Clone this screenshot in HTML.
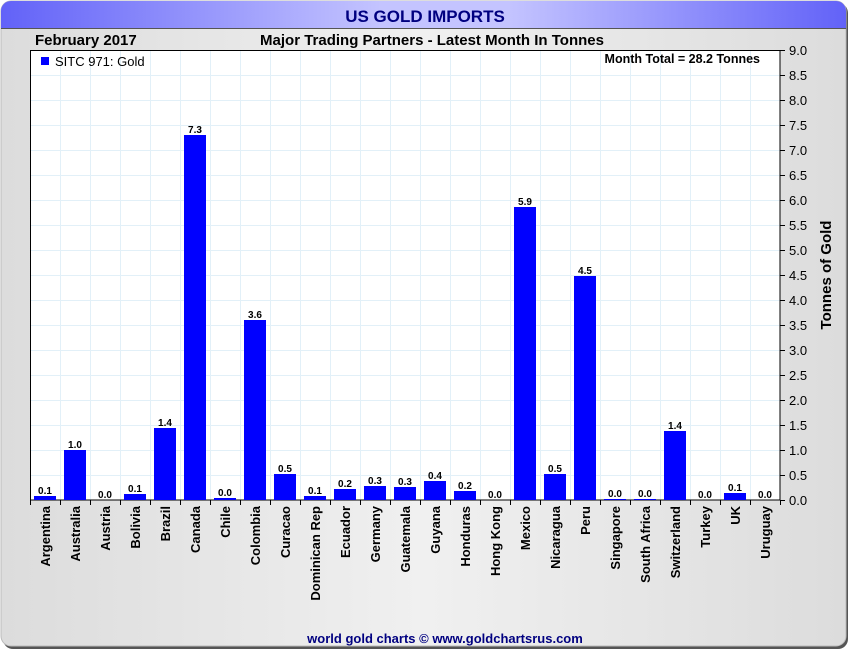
<!DOCTYPE html>
<html><head><meta charset="utf-8"><style>
body{margin:0;width:850px;height:650px;background:#fff;overflow:hidden;font-family:"Liberation Sans",Arial,sans-serif}
</style></head><body>
<svg width="850" height="650" xmlns="http://www.w3.org/2000/svg" font-family="Liberation Sans, Arial, sans-serif">
<defs>
<linearGradient id="hd" x1="0" x2="1" y1="0" y2="0"><stop offset="0" stop-color="#6262f8"/><stop offset="0.45" stop-color="#c4c4ff"/><stop offset="0.6" stop-color="#c4c4ff"/><stop offset="1" stop-color="#6262f8"/></linearGradient>
<linearGradient id="bg" x1="0" x2="1" y1="0" y2="0"><stop offset="0" stop-color="#dcdcdc"/><stop offset="0.5" stop-color="#f0f0f0"/><stop offset="1" stop-color="#dcdcdc"/></linearGradient>
</defs>
<rect x="3" y="3" width="845" height="646" rx="10" fill="#555"/>
<rect x="1" y="1" width="845" height="645" rx="10" fill="url(#bg)" stroke="#bbb"/>
<path d="M1,28 V11 A10,10 0 0 1 11,1 H836 A10,10 0 0 1 846,11 V28 Z" fill="url(#hd)"/>
<line x1="1" y1="28.5" x2="846" y2="28.5" stroke="#555"/>
<text x="425" y="22" text-anchor="middle" font-size="17" font-weight="bold" fill="#000080">US GOLD IMPORTS</text>
<text x="35" y="45" font-size="15" font-weight="bold">February 2017</text>
<text x="432" y="45" text-anchor="middle" font-size="15" font-weight="bold">Major Trading Partners - Latest Month In Tonnes</text>
<rect x="30" y="50" width="750" height="450" fill="#fff"/>
<g stroke="#e2f0f8" stroke-width="1">
<path d="M60.5,50V500M90.5,50V500M120.5,50V500M150.5,50V500M180.5,50V500M210.5,50V500M240.5,50V500M270.5,50V500M300.5,50V500M330.5,50V500M360.5,50V500M390.5,50V500M420.5,50V500M450.5,50V500M480.5,50V500M510.5,50V500M540.5,50V500M570.5,50V500M600.5,50V500M630.5,50V500M660.5,50V500M690.5,50V500M720.5,50V500M750.5,50V500"/>
<path d="M30,75.5H780M30,100.5H780M30,125.5H780M30,150.5H780M30,175.5H780M30,200.5H780M30,225.5H780M30,250.5H780M30,275.5H780M30,300.5H780M30,325.5H780M30,350.5H780M30,375.5H780M30,400.5H780M30,425.5H780M30,450.5H780M30,475.5H780"/>
</g>
<rect x="30.5" y="50.5" width="749.5" height="449.5" fill="none" stroke="#000"/>
<g fill="#0000ff">
<rect x="34" y="496" width="22" height="4"/>
<rect x="64" y="450" width="22" height="50"/>
<rect x="124" y="494" width="22" height="6"/>
<rect x="154" y="428" width="22" height="72"/>
<rect x="184" y="135" width="22" height="365"/>
<rect x="214" y="498" width="22" height="2"/>
<rect x="244" y="320" width="22" height="180"/>
<rect x="274" y="474" width="22" height="26"/>
<rect x="304" y="496" width="22" height="4"/>
<rect x="334" y="489" width="22" height="11"/>
<rect x="364" y="486" width="22" height="14"/>
<rect x="394" y="487" width="22" height="13"/>
<rect x="424" y="481" width="22" height="19"/>
<rect x="454" y="491" width="22" height="9"/>
<rect x="514" y="207" width="22" height="293"/>
<rect x="544" y="474" width="22" height="26"/>
<rect x="574" y="276" width="22" height="224"/>
<rect x="604" y="499" width="22" height="1"/>
<rect x="634" y="499" width="22" height="1"/>
<rect x="664" y="431" width="22" height="69"/>
<rect x="724" y="493" width="22" height="7"/>
</g>
<g font-size="10" font-weight="bold" text-anchor="middle">
<text x="45" y="494">0.1</text><text x="75" y="448">1.0</text><text x="105" y="498">0.0</text><text x="135" y="492">0.1</text><text x="165" y="426">1.4</text><text x="195" y="133">7.3</text><text x="225" y="496">0.0</text><text x="255" y="318">3.6</text><text x="285" y="472">0.5</text><text x="315" y="494">0.1</text><text x="345" y="487">0.2</text><text x="375" y="484">0.3</text><text x="405" y="485">0.3</text><text x="435" y="479">0.4</text><text x="465" y="489">0.2</text><text x="495" y="498">0.0</text><text x="525" y="205">5.9</text><text x="555" y="472">0.5</text><text x="585" y="274">4.5</text><text x="615" y="497">0.0</text><text x="645" y="497">0.0</text><text x="675" y="429">1.4</text><text x="705" y="498">0.0</text><text x="735" y="491">0.1</text><text x="765" y="498">0.0</text>
</g>
<path d="M30.5,500V505M60.5,500V505M90.5,500V505M120.5,500V505M150.5,500V505M180.5,500V505M210.5,500V505M240.5,500V505M270.5,500V505M300.5,500V505M330.5,500V505M360.5,500V505M390.5,500V505M420.5,500V505M450.5,500V505M480.5,500V505M510.5,500V505M540.5,500V505M570.5,500V505M600.5,500V505M630.5,500V505M660.5,500V505M690.5,500V505M720.5,500V505M750.5,500V505M780.5,500V505" stroke="#000"/>
<path d="M780,50.5h5M780,75.5h5M780,100.5h5M780,125.5h5M780,150.5h5M780,175.5h5M780,200.5h5M780,225.5h5M780,250.5h5M780,275.5h5M780,300.5h5M780,325.5h5M780,350.5h5M780,375.5h5M780,400.5h5M780,425.5h5M780,450.5h5M780,475.5h5M780,500.5h5" stroke="#000"/>
<g font-size="13" fill="#000">
<text x="789" y="55">9.0</text><text x="789" y="80">8.5</text><text x="789" y="105">8.0</text><text x="789" y="130">7.5</text><text x="789" y="155">7.0</text><text x="789" y="180">6.5</text><text x="789" y="205">6.0</text><text x="789" y="230">5.5</text><text x="789" y="255">5.0</text><text x="789" y="280">4.5</text><text x="789" y="305">4.0</text><text x="789" y="330">3.5</text><text x="789" y="355">3.0</text><text x="789" y="380">2.5</text><text x="789" y="405">2.0</text><text x="789" y="430">1.5</text><text x="789" y="455">1.0</text><text x="789" y="480">0.5</text><text x="789" y="505">0.0</text>
</g>
<text transform="translate(831,275) rotate(-90)" text-anchor="middle" font-size="15" font-weight="bold">Tonnes of Gold</text>
<g font-size="13" font-weight="bold" text-anchor="end">
<text transform="translate(50,506) rotate(-90)">Argentina</text>
<text transform="translate(80,506) rotate(-90)">Australia</text>
<text transform="translate(110,506) rotate(-90)">Austria</text>
<text transform="translate(140,506) rotate(-90)">Bolivia</text>
<text transform="translate(170,506) rotate(-90)">Brazil</text>
<text transform="translate(200,506) rotate(-90)">Canada</text>
<text transform="translate(230,506) rotate(-90)">Chile</text>
<text transform="translate(260,506) rotate(-90)">Colombia</text>
<text transform="translate(290,506) rotate(-90)">Curacao</text>
<text transform="translate(320,506) rotate(-90)">Dominican Rep</text>
<text transform="translate(350,506) rotate(-90)">Ecuador</text>
<text transform="translate(380,506) rotate(-90)">Germany</text>
<text transform="translate(410,506) rotate(-90)">Guatemala</text>
<text transform="translate(440,506) rotate(-90)">Guyana</text>
<text transform="translate(470,506) rotate(-90)">Honduras</text>
<text transform="translate(500,506) rotate(-90)">Hong Kong</text>
<text transform="translate(530,506) rotate(-90)">Mexico</text>
<text transform="translate(560,506) rotate(-90)">Nicaragua</text>
<text transform="translate(590,506) rotate(-90)">Peru</text>
<text transform="translate(620,506) rotate(-90)">Singapore</text>
<text transform="translate(650,506) rotate(-90)">South Africa</text>
<text transform="translate(680,506) rotate(-90)">Switzerland</text>
<text transform="translate(710,506) rotate(-90)">Turkey</text>
<text transform="translate(740,506) rotate(-90)">UK</text>
<text transform="translate(770,506) rotate(-90)">Uruguay</text>
</g>
<rect x="41" y="57" width="8" height="8" fill="#0000ff"/>
<text x="55" y="66" font-size="13">SITC 971: Gold</text>
<text x="760" y="63" text-anchor="end" font-size="12.5" font-weight="bold">Month Total = 28.2 Tonnes</text>
<text x="445" y="643" text-anchor="middle" font-size="13" font-weight="bold" fill="#000080">world gold charts © www.goldchartsrus.com</text>
</svg>
</body></html>
